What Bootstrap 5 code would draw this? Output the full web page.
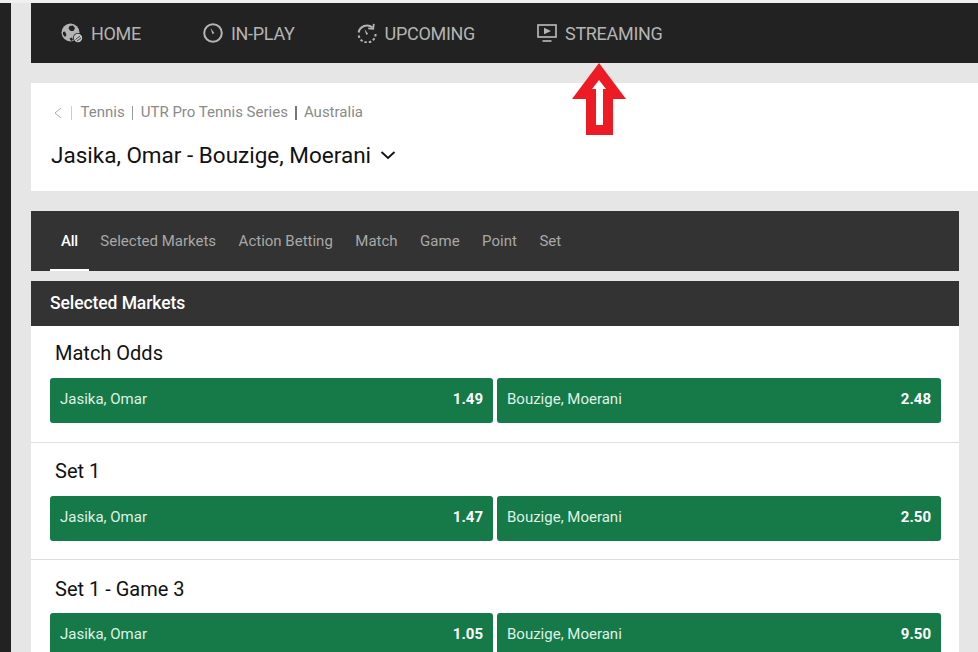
<!DOCTYPE html>
<html lang="en"><head><meta charset="utf-8">
<link href="https://cdn.jsdelivr.net/npm/bootstrap@5.3.0/dist/css/bootstrap.min.css" rel="stylesheet">
<style>
html,body{height:652px;overflow:hidden}
body{background:#e6e6e6;font-family:Roboto,"Liberation Sans",sans-serif;color:#111}
.topline{height:3px;background:#f0f0f2}
.shell{height:649px;overflow:hidden}
.siderail{width:11px;background:#222;flex:none}
.maincol{margin-left:20px;flex:1;min-width:0}
.topnav{height:60px;background:#222;padding-left:30px;gap:62px;color:#b4b4b4;font-size:18px}
.topnav span.item{display:flex;align-items:center;gap:8px;letter-spacing:-.3px}
.crumbcard{margin-top:20px;height:108px;background:#fff;padding:20px 20px 0}
.crumbs{font-size:15px;color:#8a8a8a;height:19px;padding-left:2px}
.sep{width:1px;height:14px;background:#999;margin:0 8px 0 7px}
.sep.pale{background:#ccc;margin:0 8.6px 0 9px}
.sep.strong{width:2px;background:#777;margin:0 7px}
.evt{font-size:22.5px;color:#111;margin-top:19px;line-height:28px}
.tabbar{margin-top:20px;margin-right:19px;height:60px;background:#333;padding-left:19px;font-size:15px}
.tabitem{color:#a8a8a8;padding:0 11px;margin-right:.5px;height:60px;display:flex;align-items:center}
.tabitem.on{color:#fff;font-weight:500;letter-spacing:-.25px;border-bottom:2px solid #fff;padding-top:2px;margin-right:.5px}
.secthead{margin-top:10px;margin-right:19px;height:45px;background:#333;color:#fff;font-size:17.5px;font-weight:500;padding-left:19px;padding-bottom:1px;letter-spacing:-.08px}
.marketwrap{margin-right:19px;background:#fff}
.mrow{padding:0 18px 0 19px;border-bottom:1px solid #ddd}
.mrow h6{font-size:20px;font-weight:400;margin:0;padding-left:5px;line-height:22px;color:#111}
.m1{height:117px;padding-top:16px}
.m2{height:117px;padding-top:17px}
.m3{padding-top:18px;border:0}
.pickrow{gap:4px;margin-top:14px}
.m3 .pickrow{margin-top:13px}
.oddbtn{flex:1 1 0;height:45px;background:#157a47;border-radius:3px;color:#dff1e7;font-size:15px;padding:0 10px 2px}
.oddbtn:first-child{flex:0 0 443px}
.oddbtn b{color:#fff;font-size:15px;font-weight:700}
.uparrow{position:absolute;left:572px;top:63px;width:54px;height:72px}
</style></head><body>
<div class="topline"></div>
<div class="shell d-flex">
<div class="siderail"></div>
<div class="maincol">
<nav class="topnav d-flex align-items-center">
<span class="item"><svg width="22" height="20" viewBox="0 0 22 20"><circle cx="9.500" cy="9.500" r="9" fill="#b4b4b4"/><path d="M8.500 3l3.500-.5 2 2.500-1.500 3H9.500L7.500 5.500zM2 9l2-.5 1.500 3.500-1.500 2-2-2.500zM8.500 15.500l2.500-1 1 2.500-2 1z" fill="#222"/><circle cx="17" cy="15" r="5" fill="#222"/><circle cx="17" cy="15" r="4.200" fill="#c4c4c4"/><path d="M14.500 16.500l4.500-3.500M16 18l4-3" stroke="#222" stroke-width=".8"/></svg>HOME</span>
<span class="item"><svg width="20" height="20" viewBox="0 0 20 20" fill="none" stroke="#b4b4b4"><circle cx="10" cy="10" r="8.800" stroke-width="2"/><path d="M7.500 5l3.800 5-1.800 1.200z" fill="#b4b4b4" stroke="none"/></svg>IN-PLAY</span>
<span class="item"><svg width="20" height="20" viewBox="0 0 20 20" fill="none" stroke="#b4b4b4" stroke-width="2"><path d="M1.600 9.500A8.500 8.500 0 0 1 15.500 4.500"/><path d="M18.600 11a8.500 8.500 0 0 1-17 0" stroke-dasharray="2.500 2"/><path d="M16.800.800l-.6 5-5-.5" stroke-width="1.800"/><path d="M7.500 6l3.600 4.800-1.800 1.200z" fill="#b4b4b4" stroke="none"/></svg>UPCOMING</span>
<span class="item"><svg width="20" height="20" viewBox="0 0 20 20" fill="none"><rect x="1" y="2" width="18" height="12" stroke="#b4b4b4" stroke-width="1.700"/><path d="M7 4.800l7 3.200-7 3.200z" fill="#b4b4b4"/><path d="M5.500 18h9" stroke="#b4b4b4" stroke-width="1.700"/></svg>STREAMING</span>
</nav>
<section class="crumbcard">
<div class="crumbs d-flex align-items-center"><svg width="9" height="12" viewBox="0 0 9 12" fill="none" stroke="#aaa" stroke-width="1"><path d="M8 1L2 6l6 5"/></svg><i class="sep pale"></i><span>Tennis</span><i class="sep"></i><span>UTR Pro Tennis Series</span><i class="sep strong"></i><span>Australia</span></div>
<div class="evt d-flex align-items-center">Jasika, Omar - Bouzige, Moerani<svg class="ms-2" width="18" height="12" viewBox="0 0 18 12" fill="none" stroke="#111" stroke-width="1.800"><path d="M2.500 3l6.500 6 6.500-6"/></svg></div>
</section>
<div class="tabbar d-flex">
<span class="tabitem on">All</span><span class="tabitem">Selected Markets</span><span class="tabitem">Action Betting</span><span class="tabitem">Match</span><span class="tabitem">Game</span><span class="tabitem">Point</span><span class="tabitem">Set</span>
</div>
<div class="secthead d-flex align-items-center">Selected Markets</div>
<div class="marketwrap">
<div class="mrow m1"><h6>Match Odds</h6><div class="pickrow d-flex">
<div class="oddbtn d-flex justify-content-between align-items-center"><span>Jasika, Omar</span><b>1.49</b></div>
<div class="oddbtn d-flex justify-content-between align-items-center"><span>Bouzige, Moerani</span><b>2.48</b></div></div></div>
<div class="mrow m2"><h6>Set 1</h6><div class="pickrow d-flex">
<div class="oddbtn d-flex justify-content-between align-items-center"><span>Jasika, Omar</span><b>1.47</b></div>
<div class="oddbtn d-flex justify-content-between align-items-center"><span>Bouzige, Moerani</span><b>2.50</b></div></div></div>
<div class="mrow m3"><h6>Set 1 - Game 3</h6><div class="pickrow d-flex">
<div class="oddbtn d-flex justify-content-between align-items-center"><span>Jasika, Omar</span><b>1.05</b></div>
<div class="oddbtn d-flex justify-content-between align-items-center"><span>Bouzige, Moerani</span><b>9.50</b></div></div></div>
</div>
</div>
</div>
<svg class="uparrow" viewBox="0 0 54 72"><path d="M27 0L54 36H41V72H14V36H0Z" fill="#ed1c24"/><path d="M27 17L34 26H31V62H24V26H20Z" fill="#fff"/></svg>
<script src="https://cdn.jsdelivr.net/npm/bootstrap@5.3.0/dist/js/bootstrap.bundle.min.js"></script>
</body></html>
